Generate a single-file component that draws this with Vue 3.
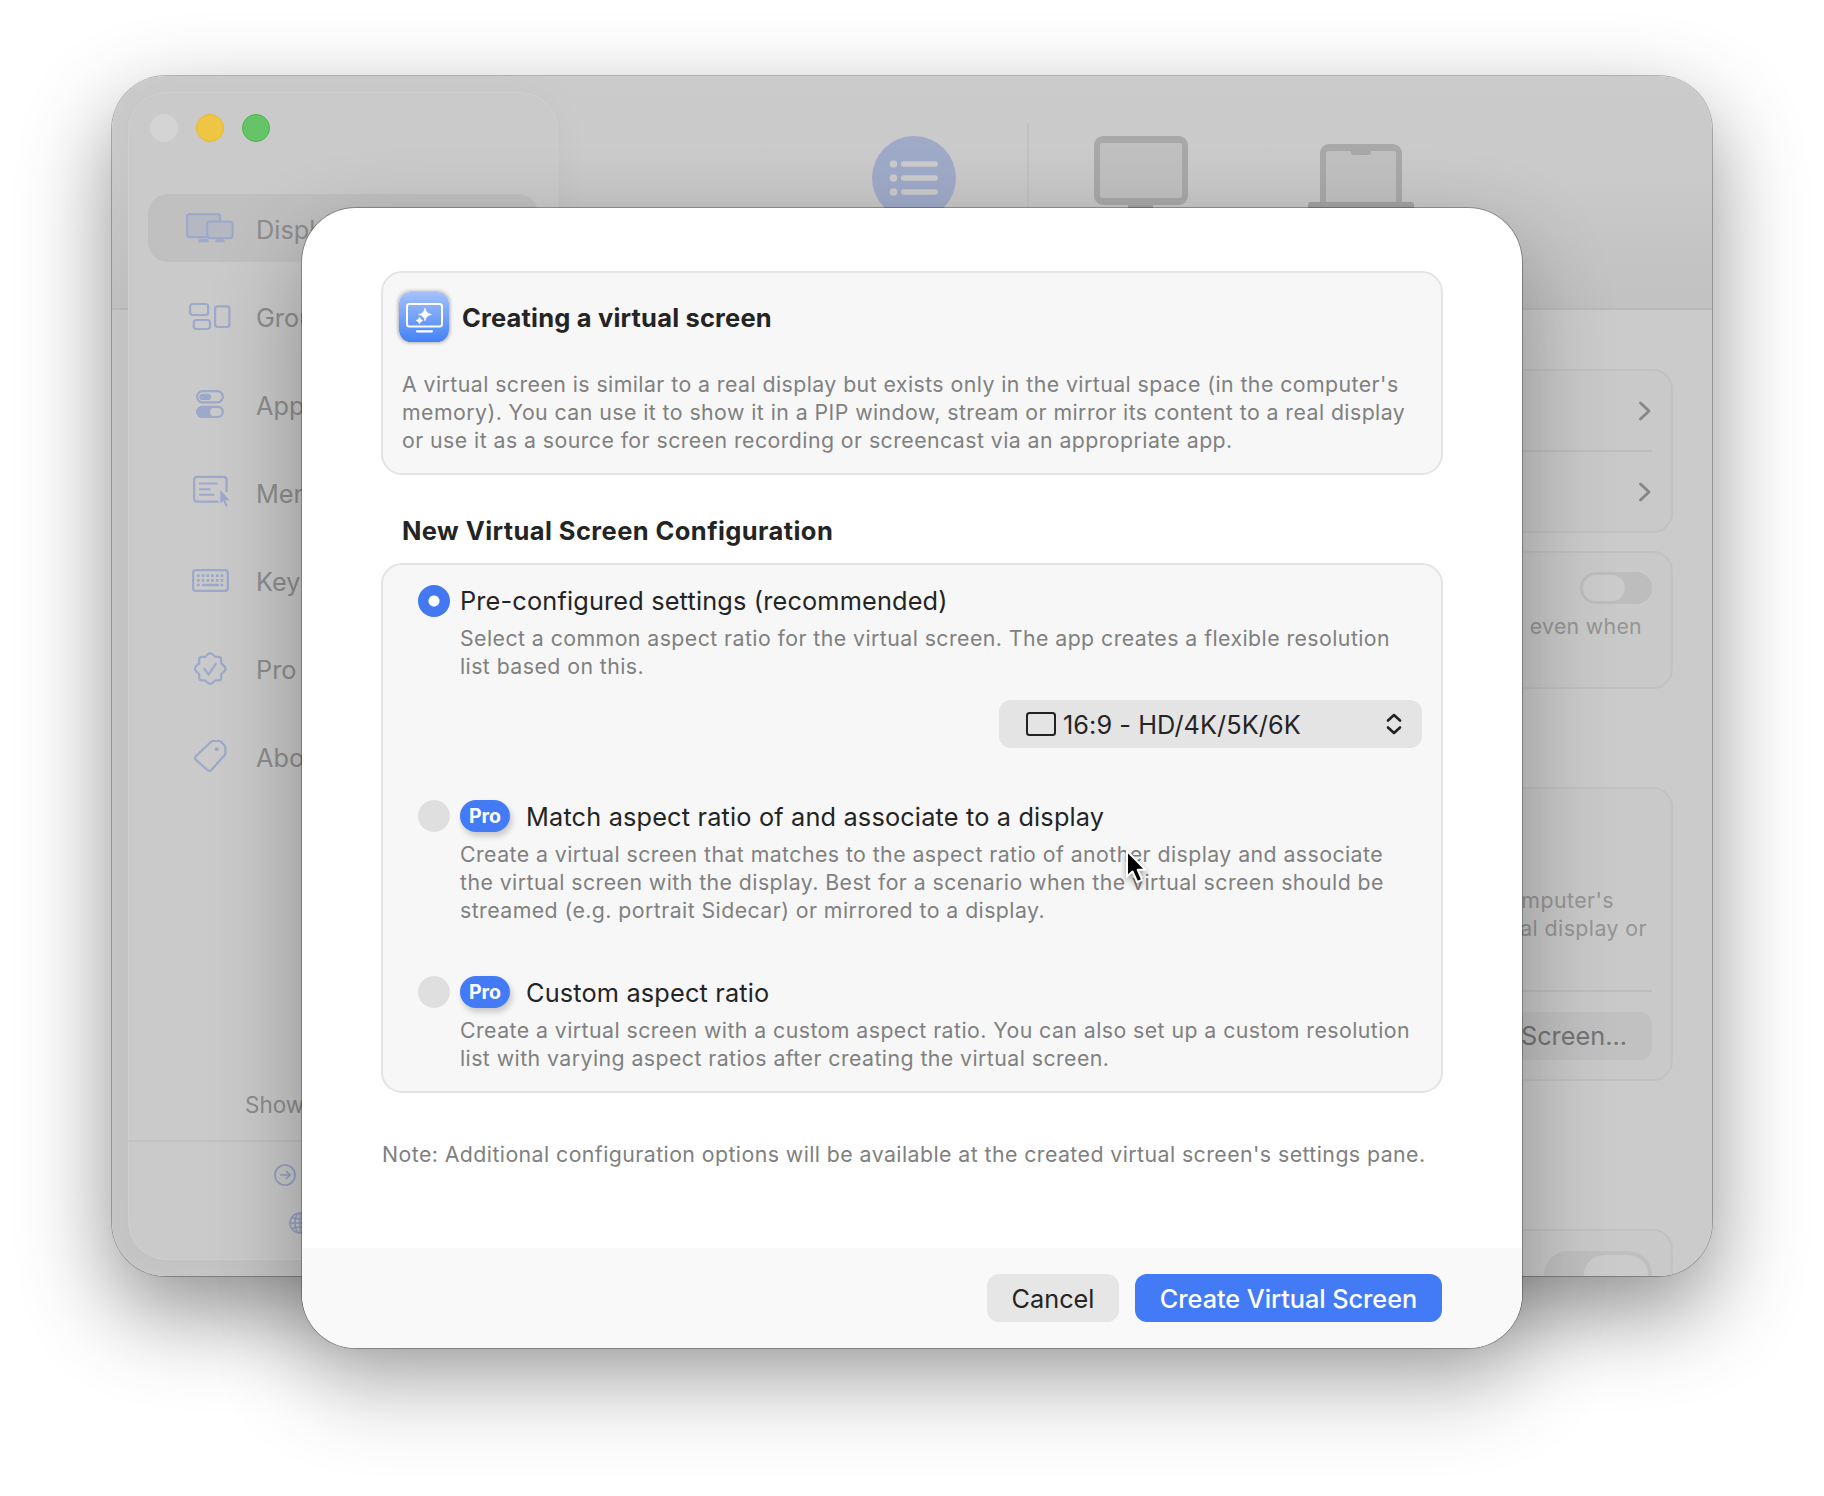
<script setup>
import { ref } from 'vue'

const navItems = [
    { icon: 'displays', label: 'Displays' },
    { icon: 'groups', label: 'Groups' },
    { icon: 'app', label: 'App' },
    { icon: 'menu', label: 'Menu' },
    { icon: 'keyboard', label: 'Keyboard' },
    { icon: 'pro', label: 'Pro' },
    { icon: 'about', label: 'About' }
]

const options = [
    {
        id: 'preset',
        title: 'Pre-configured settings (recommended)',
        lines: [
            'Select a common aspect ratio for the virtual screen. The app creates a flexible resolution',
            'list based on this.'
        ],
        select: '16:9 - HD/4K/5K/6K'
    },
    {
        id: 'match',
        pro: true,
        title: 'Match aspect ratio of and associate to a display',
        lines: [
            'Create a virtual screen that matches to the aspect ratio of another display and associate',
            'the virtual screen with the display. Best for a scenario when the virtual screen should be',
            'streamed (e.g. portrait Sidecar) or mirrored to a display.'
        ]
    },
    {
        id: 'custom',
        pro: true,
        title: 'Custom aspect ratio',
        lines: [
            'Create a virtual screen with a custom aspect ratio. You can also set up a custom resolution',
            'list with varying aspect ratios after creating the virtual screen.'
        ]
    }
]

const selected = ref('preset')
</script>

<template>
    <div class="desktop">
        <div class="window">
            <aside class="sidebar">
                <div class="lights">
                    <span class="light light-off"></span>
                    <span class="light light-yellow"></span>
                    <span class="light light-green"></span>
                </div>
                <nav class="nav">
                    <div v-for="(item, i) in navItems" :key="item.icon" class="nav-item" :class="{ active: i === 0 }">
                        <svg class="nav-icon" viewBox="0 0 48 40" width="48" height="40" fill="none" stroke="currentColor" stroke-width="2.200">
                            <g v-if="item.icon === 'displays'">
                                <rect x="1.100" y="6.100" width="33" height="23" rx="2.500" fill="#b5b8c3" />
                                <rect x="21.200" y="13.600" width="25.400" height="16.500" rx="2.500" fill="#b5b8c3" />
                                <path d="M14 31h7l2 3H12zM31 31h6l2 3H29z" fill="currentColor" stroke-width=".5" />
                            </g>
                            <g v-else-if="item.icon === 'groups'">
                                <rect x="4.100" y="8" width="18" height="11" rx="2.500" />
                                <rect x="7.800" y="24" width="16.200" height="9" rx="2.500" />
                                <rect x="29.100" y="10.300" width="14.300" height="20.700" rx="2.500" />
                            </g>
                            <g v-else-if="item.icon === 'app'">
                                <rect x="11.100" y="7.100" width="25.800" height="11.300" rx="5.600" />
                                <rect x="13.300" y="9.700" width="11.700" height="6.300" rx="3.100" fill="currentColor" stroke="none" />
                                <rect x="11.100" y="22.800" width="25.800" height="10.200" rx="5.100" />
                                <path d="M16 23h12.500a5 5 0 0 0 0 10H16a5 5 0 0 1 0-10z" fill="currentColor" stroke-width="1" />
                            </g>
                            <g v-else-if="item.icon === 'menu'">
                                <path d="M40.600 20V7.800a3 3 0 0 0-3-3H11.100a3 3 0 0 0-3 3v18.800a3 3 0 0 0 3 3H32.500" />
                                <path d="M13 11.500h18.500M13 17.200h11.500M13 22.800h15.300" stroke-width="1.900" />
                                <path d="M34.300 18v13.500l3-2.500 2.500 5.800 2-.9-2.500-5.600h4.300z" fill="currentColor" stroke="none" />
                            </g>
                            <g v-else-if="item.icon === 'keyboard'">
                                <rect x="7.100" y="10.100" width="34.800" height="20.800" rx="2.800" />
                                <path d="M10.900 15.700h28M10.900 20.300h28" stroke-width="2.800" stroke-dasharray="2.800 1.920" />
                                <path d="M10.900 25h2.800M16 25h17M34.500 25h2.800" stroke-width="2.500" />
                            </g>
                            <g v-else-if="item.icon === 'pro'" stroke-linejoin="round" stroke-linecap="round">
                                <path d="M21.500 6.500q2.700-2.200 5.400 0l2.200 2.300h3.500q2.600 0 2.600 2.600v4l3 2.500q2.600 2.800 0 5.600l-3 2.500v3.800q0 2.600-2.600 2.600h-3.500l-2.200 2.300q-2.700 2.200-5.400 0l-2.200-2.300h-3.500q-2.600 0-2.600-2.600V26l-3-2.500q-2.600-2.800 0-5.600l3-2.500v-4q0-2.600 2.600-2.600h3.500z" />
                                <path d="M18.500 21l4 5.600L29.800 15.700" />
                            </g>
                            <g v-else stroke-linejoin="round">
                                <path d="M27.500 5h5.200q1.500 0 2.500 1l3.200 3.200q1 1 1 2.500v5q0 1.500-1 2.500L25.500 34q-2 2-4 0L10 24q-2-2 0-4L24.800 6q1.200-1 2.700-1z" />
                                <circle cx="30.700" cy="13.300" r="2" fill="currentColor" stroke="none" />
                            </g>
                        </svg>
                        <span class="nav-label">{{ item.label }}</span>
                    </div>
                </nav>
                <div class="show-all">Show</div>
                <div class="links">
                    <div class="link">
                        <svg width="22" height="22" viewBox="0 0 22 22" fill="none" stroke="currentColor" stroke-width="1.700">
                            <circle cx="11" cy="11" r="10" />
                            <path d="M6 11h10M12 7l4 4-4 4" />
                        </svg>
                    </div>
                    <div class="link link-web">
                        <svg width="22" height="22" viewBox="0 0 22 22" fill="none" stroke="currentColor" stroke-width="1.500">
                            <circle cx="11" cy="11" r="10" />
                            <ellipse cx="11" cy="11" rx="5" ry="10" />
                            <path d="M1 11h20M11 1v20M3 5.500q8 3 16 0M3 16.500q8-3 16 0" />
                        </svg>
                    </div>
                </div>
            </aside>

            <section class="content">
                <header class="toolbar">
                    <div class="tool-list">
                        <svg width="84" height="84" viewBox="0 0 84 84">
                            <circle cx="42" cy="42" r="42" fill="#9faac9" />
                            <g fill="#cbcbcb">
                                <circle v-for="y in [28, 42, 56]" :key="y" cx="21.500" :cy="y" r="3.800" />
                                <rect v-for="y in [28, 42, 56]" :key="'r' + y" x="29" :y="y - 2.8" width="37" height="5.600" rx="2.800" />
                            </g>
                        </svg>
                    </div>
                    <div class="tool-divider"></div>
                    <svg class="tool-monitor" width="94" height="84" viewBox="0 0 94 84">
                        <rect width="94" height="69" rx="9" fill="#a8a8a8" />
                        <rect x="6" y="7" width="82" height="55" rx="2.500" fill="#c0c0c0" />
                        <path d="M34 69h25v12H34z" fill="#a2a2a2" />
                    </svg>
                    <svg class="tool-laptop" width="108" height="76" viewBox="0 0 108 76">
                        <path d="M13 59V9a9 9 0 0 1 9-9h64a9 9 0 0 1 9 9v50z" fill="#a8a8a8" />
                        <path d="M19 58V9.500a2.500 2.500 0 0 1 2.500-2.500h65a2.500 2.500 0 0 1 2.500 2.500V58z" fill="#c0c0c0" />
                        <path d="M44 6h20v2a3 3 0 0 1-3 3H47a3 3 0 0 1-3-3z" fill="#a8a8a8" />
                        <path d="M1 70V61a3 3 0 0 1 3-3h100a3 3 0 0 1 3 3v9z" fill="#a2a2a2" />
                    </svg>
                </header>
                <div class="panels">
                    <div class="panel panel-links">
                        <div v-for="n in 2" :key="n" class="panel-row">
                            <svg width="14" height="20" viewBox="0 0 14 20" fill="none" stroke="#868686" stroke-width="2.800" stroke-linecap="round" stroke-linejoin="round">
                                <path d="M2.500 2l8.500 8-8.500 8" />
                            </svg>
                        </div>
                    </div>
                    <div class="panel panel-switch">
                        <span class="switch"><span class="knob"></span></span>
                        <div class="hint">even when</div>
                    </div>
                    <div class="panel panel-create">
                        <p class="hint-lines">
                            <span class="hint-first">computer's</span>
                            <span>real display or</span>
                        </p>
                        <div class="panel-action">
                            <span class="dim-button">Screen...</span>
                        </div>
                    </div>
                    <div class="panel panel-last">
                        <span class="switch-large"><span class="knob-large"></span></span>
                    </div>
                </div>
            </section>
        </div>

        <div class="sheet">
            <div class="sheet-body">
                <div class="card intro">
                    <div class="intro-head">
                        <svg class="intro-icon" width="50" height="50" viewBox="0 0 50 50">
                            <defs>
                                <linearGradient id="tile" x1="0" y1="0" x2="0" y2="1">
                                    <stop offset="0" stop-color="#a4c1fb" />
                                    <stop offset="1" stop-color="#4482f7" />
                                </linearGradient>
                            </defs>
                            <rect width="50" height="50" rx="11.500" fill="url(#tile)" />
                            <rect x="8" y="12" width="35" height="22.500" rx="2.500" fill="none" stroke="#fff" stroke-width="2" />
                            <path d="M18 39.300h15" stroke="#fff" stroke-width="2.200" stroke-linecap="round" />
                            <path d="M26 16q1 5.500 6.500 6.500-5.500 1-6.500 6.500-1-5.500-6.500-6.500 5.500-1 6.500-6.500zM20.500 25q.6 3 3.500 3.500-2.900.5-3.500 3.500-.6-3-3.500-3.500 2.900-.5 3.500-3.500z" fill="#fff" stroke="#fff" stroke-width=".5" />
                        </svg>
                        <h2>Creating a virtual screen</h2>
                    </div>
                    <p class="desc intro-text">
                        A virtual screen is similar to a real display but exists only in the virtual space (in the computer's<br>
                        memory). You can use it to show it in a PIP window, stream or mirror its content to a real display<br>
                        or use it as a source for screen recording or screencast via an appropriate app.
                    </p>
                </div>

                <h2 class="section-title">New Virtual Screen Configuration</h2>

                <div class="card options">
                    <div v-for="opt in options" :key="opt.id" class="option" :class="'option-' + opt.id" @click="selected = opt.id">
                        <span class="radio" :class="{ on: selected === opt.id }"></span>
                        <div class="option-main">
                            <div class="option-title">
                                <span v-if="opt.pro" class="pro">Pro</span>
                                <span class="title-text">{{ opt.title }}</span>
                            </div>
                            <p class="desc">
                                <template v-for="line in opt.lines" :key="line">{{ line }}<br></template>
                            </p>
                            <div v-if="opt.select" class="select">
                                <svg width="30" height="24" viewBox="0 0 30 24" fill="none" stroke="#222" stroke-width="2">
                                    <rect x="1" y="1" width="28" height="22" rx="2.500" />
                                </svg>
                                <span class="select-text">{{ opt.select }}</span>
                                <svg class="select-arrows" width="16" height="22" viewBox="0 0 16 22" fill="none" stroke="#222" stroke-width="2.600" stroke-linecap="round" stroke-linejoin="round">
                                    <path d="M2 7.500l6-5.500 6 5.500M2 14.500l6 5.500 6-5.500" />
                                </svg>
                            </div>
                        </div>
                    </div>
                </div>

                <p class="desc note">Note: Additional configuration options will be available at the created virtual screen's settings pane.</p>
            </div>
            <footer class="sheet-footer">
                <button class="btn btn-cancel">Cancel</button>
                <button class="btn btn-create">Create Virtual Screen</button>
            </footer>
        </div>

        <svg class="cursor" width="26" height="40" viewBox="0 0 26 40">
            <path d="M2 2v25.500l5.500-5 4.700 10.500 5-2.200-4.500-10H20.500z" fill="#000" stroke="#fff" stroke-width="2" stroke-linejoin="round" />
        </svg>
    </div>
</template>

<style>
    body {
        margin: 0;
        background: #fff;
    }
</style>

<style scoped>
    * {
        box-sizing: border-box;
        margin: 0;
        padding: 0;
    }

    .desktop {
        position: relative;
        width: 1824px;
        height: 1496px;
        overflow: hidden;
        background: #fff;
        font-family: Inter, "Liberation Sans", sans-serif;
        white-space: nowrap;
    }

    .window {
        position: absolute;
        left: 112px;
        top: 76px;
        width: 1600px;
        height: 1200px;
        display: flex;
        border-radius: 54px;
        overflow: hidden;
        background: linear-gradient(#cbcbcb 0, #cacaca 90px, #c1c1c1 232px, #b9b9b9 232px, #b9b9b9 234px, #c6c6c6 234px);
        box-shadow: 0 0 0 1px rgba(0, 0, 0, 0.25), 0 36px 90px rgba(0, 0, 0, 0.44);
    }

    .sidebar {
        width: 430px;
        margin: 16px 0 16px 16px;
        display: flex;
        flex-direction: column;
        border-radius: 38px;
        background: #cacaca;
        box-shadow: inset 0 0 0 1px rgba(255, 255, 255, 0.1), 0 0 40px rgba(0, 0, 0, 0.03);
        color: #8d8d8d;
        font-size: 25.300px;
    }

    .lights {
        display: flex;
        gap: 18px;
        padding: 22px 0 0 22px;
    }

    .light {
        width: 28px;
        height: 28px;
        border-radius: 50%;
    }

    .light-off {
        background: #d4d4d4;
    }

    .light-yellow {
        background: #eec643;
        border: 1px solid #efb920;
    }

    .light-green {
        background: #66c368;
        border: 1px solid #3fb744;
    }

    .nav {
        display: flex;
        flex-direction: column;
        gap: 20px;
        padding: 52px 20px 0;
    }

    .nav-item {
        display: flex;
        align-items: center;
        gap: 22px;
        height: 68px;
        padding-left: 38px;
        border-radius: 20px;
    }

    .nav-item.active {
        background: #c0c0c0;
    }

    .nav-icon {
        color: #9da9cb;
    }

    .nav-label {
        padding-top: 2px;
    }

    .show-all {
        margin-top: auto;
        padding-left: 117px;
        height: 49px;
        font-size: 22.500px;
        line-height: 27px;
    }

    .links {
        height: 120px;
        padding: 22px 0 0 146px;
        border-top: 2px solid #c2c2c2;
        color: #94a1c4;
        line-height: 22px;
    }

    .link {
        display: flex;
        height: 48px;
    }

    .link-web {
        padding-left: 15px;
    }

    .content {
        flex: 1;
        display: flex;
        flex-direction: column;
    }

    .toolbar {
        height: 234px;
        display: flex;
        align-items: flex-start;
        padding: 60px 0 0 314px;
    }

    .tool-divider {
        width: 2px;
        height: 110px;
        margin: -13px 65px 0 71px;
        background: #c1c1c1;
    }

    .tool-laptop {
        margin: 8px 0 0 119px;
    }

    .panels {
        flex: 1;
        display: flex;
        flex-direction: column;
        align-items: stretch;
        padding: 59px 39px 0 20px;
        background: #cbcbcb;
        color: #959595;
        overflow: hidden;
    }

    .panel {
        flex-shrink: 0;
        border: 2px solid #c2c2c2;
        border-radius: 20px;
        background: #c9c9c9;
        padding: 0 19px;
    }

    .panel-links {
        height: 164px;
    }

    .panel-row {
        display: flex;
        align-items: center;
        justify-content: flex-end;
        height: 79px;
    }

    .panel-row + .panel-row {
        height: 82px;
        border-top: 2px solid #bebebe;
    }

    .panel-switch {
        height: 138px;
        margin-top: 18px;
        padding-top: 19px;
        display: flex;
        flex-direction: column;
        align-items: flex-end;
    }

    .switch {
        width: 72px;
        height: 32px;
        padding: 3px;
        border-radius: 16px;
        background: #bdbdbd;
    }

    .knob {
        display: block;
        width: 42px;
        height: 26px;
        border-radius: 13px;
        background: #cbcbcb;
    }

    .hint {
        margin: 8px 10px 0 0;
        font-size: 21.300px;
        line-height: 28px;
        letter-spacing: 0.3px;
    }

    .panel-create {
        height: 294px;
        margin-top: 98px;
        padding-top: 97px;
    }

    .hint-lines {
        display: flex;
        flex-direction: column;
        align-items: flex-end;
        height: 104px;
        padding-right: 5px;
        font-size: 21.300px;
        line-height: 28px;
        letter-spacing: 0.44px;
    }

    .hint-first {
        margin-right: 33px;
    }

    .panel-action {
        display: flex;
        justify-content: flex-end;
        padding-top: 20px;
        border-top: 2px solid #bebebe;
    }

    .dim-button {
        width: 306px;
        height: 48px;
        padding-right: 25px;
        border-radius: 12px;
        background: #c1c1c1;
        color: #747474;
        font-size: 25.300px;
        line-height: 48px;
        text-align: right;
    }

    .panel-last {
        display: flex;
        justify-content: flex-end;
        height: 120px;
        margin-top: 148px;
        padding-top: 20px;
    }

    .switch-large {
        display: flex;
        justify-content: flex-end;
        width: 108px;
        height: 48px;
        padding: 4px;
        border-radius: 24px;
        background: #bfbfbf;
    }

    .knob-large {
        width: 64px;
        height: 40px;
        border-radius: 20px;
        background: #cbcbcb;
    }

    .sheet {
        position: absolute;
        left: 302px;
        top: 208px;
        width: 1220px;
        height: 1140px;
        display: flex;
        flex-direction: column;
        border-radius: 54px;
        overflow: hidden;
        background: #fff;
        box-shadow: 0 0 0 1px rgba(0, 0, 0, 0.28), 0 36px 90px rgba(0, 0, 0, 0.3);
        color: #242424;
    }

    .sheet-body {
        flex: 1;
        padding: 63px 79px 0;
    }

    .card {
        border: 2px solid #e4e4e4;
        border-radius: 21px;
        background: #f7f7f7;
    }

    .intro {
        height: 204px;
        padding: 19px 16px 0;
    }

    .intro-head {
        display: flex;
        align-items: center;
        gap: 13px;
    }

    .intro-icon {
        border-radius: 11.500px;
        box-shadow: 0 0 4px rgba(0, 0, 0, 0.45);
    }

    h2 {
        padding-top: 1px;
        font-size: 25.500px;
        font-weight: 700;
        line-height: 32px;
        letter-spacing: 0.18px;
    }

    .desc {
        font-size: 21.300px;
        line-height: 28px;
        letter-spacing: 0.435px;
        color: #808080;
    }

    .intro-text {
        margin: 28px 0 0 3px;
    }

    .section-title {
        margin: 39px 0 0 21px;
        height: 49px;
        letter-spacing: 0.42px;
    }

    .options {
        height: 530px;
        padding: 19px 19px 0 35px;
    }

    .option {
        display: flex;
        gap: 10px;
    }

    .option-preset {
        height: 216px;
    }

    .option-match {
        height: 176px;
    }

    .radio {
        width: 32px;
        height: 32px;
        flex-shrink: 0;
        border-radius: 50%;
        background: #dfdfdf;
    }

    .radio.on {
        margin-top: 1px;
        background: radial-gradient(circle, #fff 5px, #4378f0 6px);
    }

    .option-main {
        flex: 1;
        display: flex;
        flex-direction: column;
    }

    .option-title {
        display: flex;
        align-items: center;
        height: 32px;
        margin-bottom: 8px;
        font-size: 25.300px;
    }

    .title-text {
        letter-spacing: 0.17px;
    }

    .pro {
        width: 50px;
        height: 32px;
        margin-right: 16px;
        border-radius: 16px;
        background: #437af6;
        box-shadow: 2px 4px 6px rgba(0, 0, 0, 0.2);
        color: #fff;
        font-size: 19.500px;
        font-weight: 700;
        line-height: 32px;
        text-align: center;
    }

    .select {
        display: flex;
        align-items: center;
        align-self: flex-end;
        width: 423px;
        height: 48px;
        margin-top: 20px;
        padding: 0 20px 0 27px;
        border-radius: 12px;
        background: #e4e4e4;
        font-size: 25.300px;
    }

    .select-text {
        margin-left: 7px;
        letter-spacing: 0.06px;
    }

    .select-arrows {
        margin-left: auto;
    }

    .note {
        margin: 47px 0 0 1px;
    }

    .sheet-footer {
        display: flex;
        justify-content: flex-end;
        gap: 16px;
        height: 100px;
        padding: 26px 80px 0;
        background: #f9f9f9;
    }

    .btn {
        height: 48px;
        border: none;
        border-radius: 12px;
        font-family: inherit;
        font-size: 25.300px;
    }

    .btn-cancel {
        width: 132px;
        background: #e6e6e6;
        color: #242424;
    }

    .btn-create {
        width: 307px;
        background: #437af6;
        color: #fff;
        font-weight: 500;
        letter-spacing: -0.05px;
    }

    .cursor {
        position: absolute;
        left: 1125px;
        top: 849px;
        filter: drop-shadow(0 3px 3px rgba(0, 0, 0, 0.35));
    }
</style>
